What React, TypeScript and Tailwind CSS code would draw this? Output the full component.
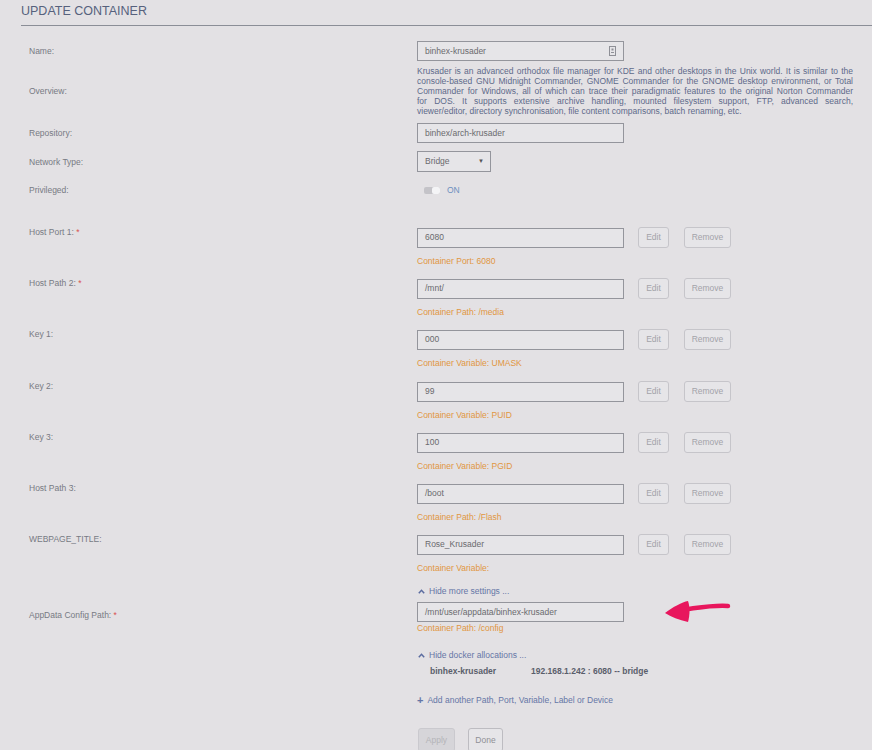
import React from "react";

const font = { fontFamily: '"Liberation Sans", Arial, sans-serif' };

const overview = [
  "Krusader is an advanced orthodox file manager for KDE and other desktops in the Unix world. It is similar to the",
  "console-based GNU Midnight Commander, GNOME Commander for the GNOME desktop environment, or Total",
  "Commander for Windows, all of which can trace their paradigmatic features to the original Norton Commander",
  "for DOS. It supports extensive archive handling, mounted filesystem support, FTP, advanced search,",
  "viewer/editor, directory synchronisation, file content comparisons, batch renaming, etc.",
];

type Entry = { label: string; required?: boolean; value: string; note: string; tall?: boolean };

const entries: Entry[] = [
  { label: "Host Port 1:", required: true, value: "6080", note: "Container Port: 6080" },
  { label: "Host Path 2:", required: true, value: "/mnt/", note: "Container Path: /media" },
  { label: "Key 1:", value: "000", note: "Container Variable: UMASK", tall: true },
  { label: "Key 2:", value: "99", note: "Container Variable: PUID" },
  { label: "Key 3:", value: "100", note: "Container Variable: PGID" },
  { label: "Host Path 3:", value: "/boot", note: "Container Path: /Flash" },
  { label: "WEBPAGE_TITLE:", value: "Rose_Krusader", note: "Container Variable:" },
];

const ui = {
  label: "w-[388px] shrink-0 text-[8.5px] leading-[10px] text-[#777a83]",
  field:
    "flex h-[20px] items-center border border-[#94959c] bg-[#e6e5e8] pl-[7px] text-[8.5px] text-[#6a6a6e]",
  note: "text-[8.5px] leading-[10px] text-[#e1963f]",
  btn: "flex h-[21px] items-center justify-center rounded-[3px] border border-[#c6c5ca] bg-[#e6e5e8] text-[8.5px] text-[#a3a3a8]",
  link: "flex items-center gap-[4px] text-[8.5px] leading-[10px] text-[#6576a6]",
} as const;

function Label({ text, required }: { text: string; required?: boolean }) {
  return (
    <div className={ui.label}>
      {text}
      {required ? <span className="text-[#d9534f]"> *</span> : null}
    </div>
  );
}

function ChevronUp() {
  return (
    <svg width="7" height="5" viewBox="0 0 7 5">
      <path d="M0.8 4.2 L3.5 1.3 L6.2 4.2" fill="none" stroke="#5b6ca0" strokeWidth="1.5" />
    </svg>
  );
}

function EntryRow({ e }: { e: Entry }) {
  return (
    <div className={e.tall ? "flex h-[52px] items-start" : "flex h-[51px] items-start"}>
      <Label text={e.label} required={e.required} />
      <div>
        <div className="flex items-center">
          <div className={`${ui.field} w-[207px]`}>{e.value}</div>
          <div className={`${ui.btn} ml-[14px] w-[31px]`}>Edit</div>
          <div className={`${ui.btn} ml-[15px] w-[47px]`}>Remove</div>
        </div>
        <div className={`${ui.note} mt-[8px]`}>{e.note}</div>
      </div>
    </div>
  );
}

export default function App() {
  return (
    <div className="relative h-[750px] overflow-hidden bg-[#e3e1e4]" style={font}>
      <div className="ml-[21px] h-[26px] border-b border-[#8b8e97] pt-[4px]">
        <h1 className="text-[12.5px] leading-[14px] text-[#56617d]">UPDATE CONTAINER</h1>
      </div>

      <div className="pl-[29px]">
        {/* Name */}
        <div className="mt-[15px] flex items-center">
          <Label text="Name:" />
          <div className={`${ui.field} w-[207px] justify-between pr-[7px]`}>
            <span>binhex-krusader</span>
            <svg width="7" height="10" viewBox="0 0 7 10">
              <rect x="0.5" y="0.5" width="6" height="9" fill="none" stroke="#8e8f96" />
              <rect x="2.5" y="2.5" width="2" height="2" fill="#8e8f96" />
              <path d="M2 6.5 H5" stroke="#8e8f96" />
            </svg>
          </div>
        </div>

        {/* Overview */}
        <div className="mt-[5px] flex items-center">
          <Label text="Overview:" />
          <div className="w-[436px] text-[8.5px] leading-[10px] text-[#5e6a8a]">
            {overview.map((l, i) => (
              <div
                key={i}
                className={i < overview.length - 1 ? "text-justify [text-align-last:justify]" : ""}
              >
                {l}
              </div>
            ))}
          </div>
        </div>

        {/* Repository */}
        <div className="mt-[7px] flex items-center">
          <Label text="Repository:" />
          <div className={`${ui.field} w-[207px]`}>binhex/arch-krusader</div>
        </div>

        {/* Network type */}
        <div className="mt-[8px] flex items-center">
          <Label text="Network Type:" />
          <div className={`${ui.field} h-[21px] w-[74px] justify-between pr-[6px]`}>
            <span>Bridge</span>
            <span className="text-[6px] text-[#555]">▼</span>
          </div>
        </div>

        {/* Privileged */}
        <div className="mt-[8px] flex h-[20px] items-center">
          <Label text="Privileged:" />
          <div className="ml-[7px] flex items-center gap-[7px]">
            <div className="flex h-[7px] w-[16px] items-center justify-end rounded-[2px] bg-[#c4c3c8]">
              <div className="h-[7px] w-[8px] rounded-[2px] bg-[#f4f4f6]" />
            </div>
            <span className="text-[8.5px] text-[#6d90bf]">ON</span>
          </div>
        </div>

        {/* Config entries */}
        <div className="mt-[27px]">
          {entries.map((e) => (
            <EntryRow key={e.label} e={e} />
          ))}
        </div>

        <div className="ml-[388px] mt-[1px]">
          <div className={`${ui.link} pl-[1px]`}>
            <ChevronUp />
            <span>Hide more settings ...</span>
          </div>
        </div>

        {/* AppData */}
        <div className="mt-[6px] flex items-start">
          <div className="pt-[8px]">
            <Label text="AppData Config Path:" required />
          </div>
          <div>
            <div className={`${ui.field} w-[207px]`}>/mnt/user/appdata/binhex-krusader</div>
            <div className={`${ui.note} mt-[1px]`}>Container Path: /config</div>
          </div>
        </div>

        <div className="ml-[388px]">
          <div className={`${ui.link} mt-[17px] pl-[1px]`}>
            <ChevronUp />
            <span>Hide docker allocations ...</span>
          </div>
          <div className="mt-[6px] flex text-[8.5px] font-bold leading-[10px] text-[#5a5e6b]">
            <span className="ml-[13px] w-[101px]">binhex-krusader</span>
            <span>192.168.1.242 : 6080 -- bridge</span>
          </div>
          <div className={`${ui.link} mt-[19px] gap-[3px]`}>
            <span className="text-[11px] font-bold leading-[10px]">+</span>
            <span>Add another Path, Port, Variable, Label or Device</span>
          </div>
          <div className="mt-[23px] flex gap-[13px] pl-[1px]">
            <div className="flex h-[24px] w-[37px] items-center justify-center rounded-[3px] border border-[#cac9ce] bg-[#d6d5d9] text-[8.5px] text-[#b4b4b8]">
              Apply
            </div>
            <div className="flex h-[24px] w-[35px] items-center justify-center rounded-[3px] border border-[#bdbcc1] bg-[#e6e5e8] text-[8.5px] text-[#909096]">
              Done
            </div>
          </div>
        </div>
      </div>

      {/* hand-drawn annotation arrow */}
      <svg className="absolute left-[655px] top-[595px]" width="85" height="35" viewBox="0 0 85 35">
        <path d="M73 11 C60 10 48 12 33 14" fill="none" stroke="#e8165d" strokeWidth="4.5" strokeLinecap="round" />
        <path d="M10 18 C18 12 27 7 33 6 C35 12 35 20 33 27 C24 25 16 22 10 18 Z" fill="#e8165d" />
      </svg>
    </div>
  );
}
